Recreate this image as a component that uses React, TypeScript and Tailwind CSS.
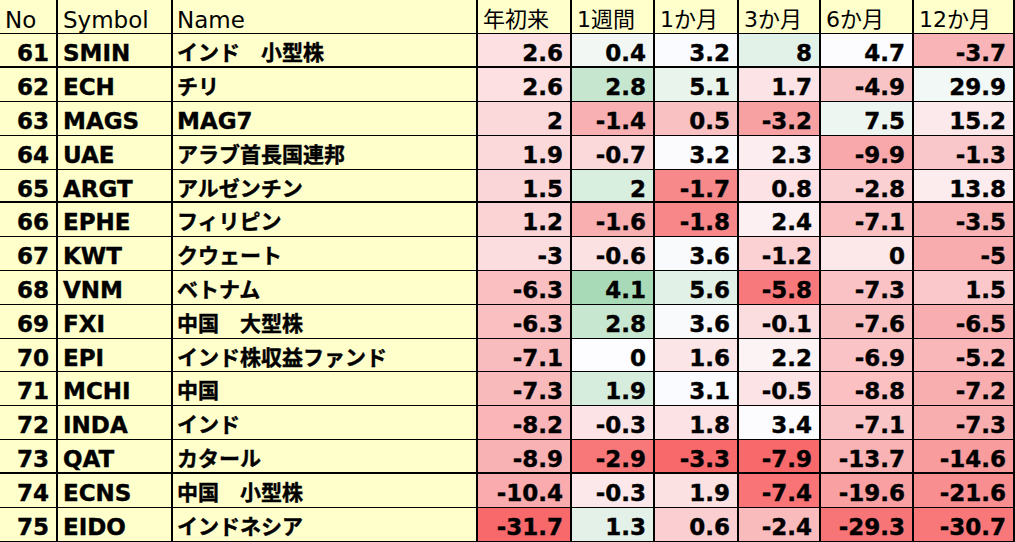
import React from 'react'

type Row = { no: number; sym: string; name: string; vals: string[]; bg: string[]; h: string; line: string }

const cols = ['w-[94px]', 'w-[83px]', 'w-[84px]', 'w-[82px]', 'w-[93px]', 'w-[101px]']
const heads = ['年初来', '1週間', '1か月', '3か月', '6か月', '12か月']

const rows: Row[] = [
  { no: 61, sym: 'SMIN', name: 'インド　小型株', vals: ['2.6', '0.4', '3.2', '8', '4.7', '-3.7'], bg: ['#FCE0E2', '#F2F7F4', '#FAFBFE', '#E3F2E8', '#FCFCFF', '#F8B4B6'], h: 'h-[34px]', line: 'border-b-2' },
  { no: 62, sym: 'ECH', name: 'チリ', vals: ['2.6', '2.8', '5.1', '1.7', '-4.9', '29.9'], bg: ['#FCE0E2', '#C6E6CF', '#E8F4EC', '#FCE4E6', '#F9C4C6', '#F2F8F5'], h: 'h-[34px]', line: 'border-b' },
  { no: 63, sym: 'MAGS', name: 'MAG7', vals: ['2', '-1.4', '0.5', '-3.2', '7.5', '15.2'], bg: ['#FBD9DB', '#F9B0B2', '#FAC1C3', '#F8A1A3', '#EDF6F1', '#FCE9EB'], h: 'h-[34px]', line: 'border-b' },
  { no: 64, sym: 'UAE', name: 'アラブ首長国連邦', vals: ['1.9', '-0.7', '3.2', '2.3', '-9.9', '-1.3'], bg: ['#FBD9DB', '#FBD8DA', '#FBFBFE', '#FCEEF0', '#F8A8AA', '#F9C7C9'], h: 'h-[34px]', line: 'border-b' },
  { no: 65, sym: 'ARGT', name: 'アルゼンチン', vals: ['1.5', '2', '-1.7', '0.8', '-2.8', '13.8'], bg: ['#FBD6D8', '#D8EEDF', '#F8898B', '#FCE2E4', '#FAD0D2', '#FCECEE'], h: 'h-[33px]', line: 'border-b-2' },
  { no: 66, sym: 'EPHE', name: 'フィリピン', vals: ['1.2', '-1.6', '-1.8', '2.4', '-7.1', '-3.5'], bg: ['#FBD3D5', '#F9AEB0', '#F8878A', '#FCF0F2', '#F9BFC1', '#F8B2B4'], h: 'h-[34px]', line: 'border-b' },
  { no: 67, sym: 'KWT', name: 'クウェート', vals: ['-3', '-0.6', '3.6', '-1.2', '0', '-5'], bg: ['#FCDDDF', '#FCE1E3', '#F8FAFB', '#FBD1D3', '#FCE7E9', '#F9ACAE'], h: 'h-[34px]', line: 'border-b' },
  { no: 68, sym: 'VNM', name: 'ベトナム', vals: ['-6.3', '4.1', '5.6', '-5.8', '-7.3', '1.5'], bg: ['#F9BFC1', '#A9DAB7', '#E2F1E7', '#F8797B', '#FAC2C4', '#FAC8CA'], h: 'h-[34px]', line: 'border-b' },
  { no: 69, sym: 'FXI', name: '中国　大型株', vals: ['-6.3', '2.8', '3.6', '-0.1', '-7.6', '-6.5'], bg: ['#F9BFC1', '#C8E7D1', '#F8FAFB', '#FBDDDF', '#F9C0C2', '#F8AEB0'], h: 'h-[34px]', line: 'border-b' },
  { no: 70, sym: 'EPI', name: 'インド株収益ファンド', vals: ['-7.1', '0', '1.6', '2.2', '-6.9', '-5.2'], bg: ['#F9BCBE', '#FDFDFF', '#FCE5E7', '#FCF3F5', '#FAC3C5', '#F9B7B9'], h: 'h-[33px]', line: 'border-b' },
  { no: 71, sym: 'MCHI', name: '中国', vals: ['-7.3', '1.9', '3.1', '-0.5', '-8.8', '-7.2'], bg: ['#F9BABC', '#D6EDDD', '#FAFBFE', '#FCE4E6', '#FAC0C2', '#F8ADAF'], h: 'h-[34px]', line: 'border-b' },
  { no: 72, sym: 'INDA', name: 'インド', vals: ['-8.2', '-0.3', '1.8', '3.4', '-7.1', '-7.3'], bg: ['#F9B5B7', '#FCE4E6', '#FCE2E4', '#FCFCFF', '#FAC5C7', '#F8ADAF'], h: 'h-[34px]', line: 'border-b' },
  { no: 73, sym: 'QAT', name: 'カタール', vals: ['-8.9', '-2.9', '-3.3', '-7.9', '-13.7', '-14.6'], bg: ['#F9B2B4', '#F8787A', '#F8696B', '#F8696B', '#F9B3B5', '#F99C9E'], h: 'h-[34px]', line: 'border-b-2' },
  { no: 74, sym: 'ECNS', name: '中国　小型株', vals: ['-10.4', '-0.3', '1.9', '-7.4', '-19.6', '-21.6'], bg: ['#F9ABAD', '#FCE8EA', '#FCE1E3', '#F87476', '#F9A0A2', '#F88E90'], h: 'h-[34px]', line: 'border-b' },
  { no: 75, sym: 'EIDO', name: 'インドネシア', vals: ['-31.7', '1.3', '0.6', '-2.4', '-29.3', '-30.7'], bg: ['#F8696B', '#E3F1E8', '#FBCFD1', '#FABBBD', '#F87577', '#F8787A'], h: 'h-[34px]', line: 'border-b' },
]

const font = { fontFamily: '"DejaVu Sans", "Noto Sans CJK JP", sans-serif' }

export default function App() {
  return (
    <div className="w-[1015px] h-[542px] overflow-hidden bg-white text-black" style={font}>
      {/* header */}
      <div className="flex h-[34px] border-b border-black bg-[#FFFFCC] text-[23px] leading-[28px]">
        <div className="w-[58px] border-r-2 border-black pl-[5px] pt-[6px]">No</div>
        <div className="w-[115px] border-r-2 border-black pl-[5px] pt-[6px]">Symbol</div>
        <div className="w-[305px] border-r-2 border-black pl-[4px] pt-[6px]">Name</div>
        {heads.map((t, i) => (
          <div key={t} className={`${cols[i]} border-r-2 border-black pl-[5px] pt-[6px] text-[22px]`}>
            {t}
          </div>
        ))}
      </div>
      {rows.map((r) => (
        <div
          key={r.no}
          className={`flex ${r.h} ${r.line} border-black font-bold text-[23px] leading-[28px] [-webkit-text-stroke:0.4px_black]`}
        >
          <div className="w-[58px] border-r-2 border-black bg-[#FFFFCC] pr-[7px] pt-[5px] text-right">{r.no}</div>
          <div className="w-[115px] border-r-2 border-black bg-[#FFFFCC] pl-[5px] pt-[5px]">{r.sym}</div>
          <div
            className={`w-[305px] border-r-2 border-black bg-[#FFFFCC] pl-[4px] pt-[5px] whitespace-nowrap ${
              /^[A-Za-z0-9]+$/.test(r.name) ? 'text-[23px]' : 'text-[21px]'
            }`}
          >
            {r.name}
          </div>
          {r.vals.map((v, i) => (
            <div
              key={i}
              className={`${cols[i]} border-r-2 border-black pr-[7px] pt-[5px] text-right`}
              style={{ backgroundColor: r.bg[i] }}
            >
              {v}
            </div>
          ))}
        </div>
      ))}
    </div>
  )
}
